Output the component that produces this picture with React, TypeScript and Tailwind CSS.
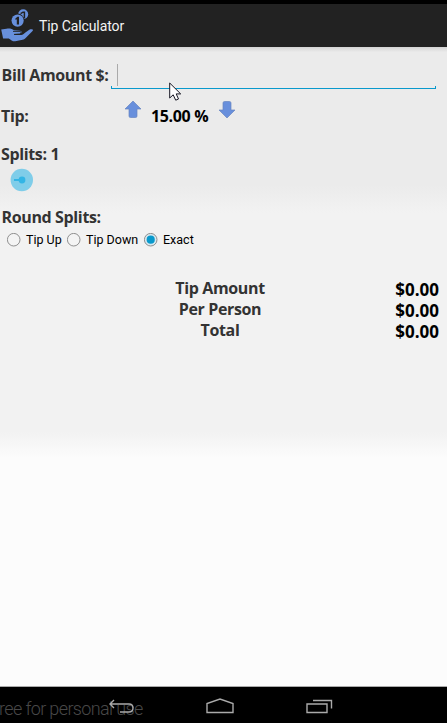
import type { ReactNode } from 'react';

function TipLogo() {
  return (
    <svg width="34" height="34" viewBox="0 0 34 34" fill="#678fdc" className="block">
      <circle cx="23.2" cy="5.2" r="5" />
      <path d="M20.6 4.6l2.4-1.4h1.4v6" stroke="#222" strokeWidth="1.5" fill="none" />
      <circle cx="17.6" cy="11.6" r="7" fill="#222" />
      <circle cx="17.6" cy="11.6" r="6.1" />
      <path d="M15.4 9.4l2.1-1.7h1.5v7.8h-2.2v-5.2l-1.2.6z" fill="#222" />
      <path d="M1.2 20.5L6.5 19.7c3-.7 5.4-.1 7.4 1.5l6.2.6c2 .3 2.1 2.5.2 2.9l-6 .2v1l7 .1c1.6-.2 2.4-1 3.4-2l4.6-3.2c1.9-.9 4.3-.3 3.5.9l-7.4 7.5c-1.2 1.2-2.3 1.6-4 1.8l-6.2 1.3c-2.8.2-4.1-1.4-6.4-2.9H3.1z" />
      <path d="M13 22.4h7.4q1.4 1.4-.2 2.7l-6.2.3" stroke="#222" strokeWidth=".9" fill="none" />
    </svg>
  );
}

function Arrow({ down = false }: { down?: boolean }) {
  return (
    <svg width="18" height="19" viewBox="0 0 18 19" className={down ? 'block rotate-180' : 'block'}>
      <path d="M9 1L17 9H13V16Q13 17.5 11.5 17.5H6.5Q5 17.5 5 16V9H1Z" fill="#688fdc" stroke="#6785c0" strokeWidth=".7" strokeLinejoin="round" />
    </svg>
  );
}

function Radio({ checked = false }: { checked?: boolean }) {
  return (
    <svg width="14" height="14" viewBox="0 0 14 14" className="block shrink-0">
      <circle cx="6.7" cy="6.7" r="6.3" fill={checked ? '#d9eaf1' : '#f4f4f4'} stroke="#858585" strokeWidth=".9" />
      {checked && <circle cx="6.7" cy="6.7" r="4.1" fill="#0999cc" />}
    </svg>
  );
}

function Label({ children }: { children: ReactNode }) {
  return <span className="block whitespace-nowrap text-base leading-5 font-bold tracking-[-0.36px] text-[#333]">{children}</span>;
}

export default function App() {
  const totals = ['Tip Amount', 'Per Person', 'Total'];
  return (
    <div className="flex h-[723px] w-[447px] flex-col overflow-hidden bg-black font-['Open_Sans','Noto_Sans',sans-serif]">
      <header className="mt-1 flex h-[43px] shrink-0 items-center bg-[#222]">
        <div className="h-[34px] w-[34px]"><TipLogo /></div>
        <h1 className="ml-[5px] whitespace-nowrap font-['Roboto',sans-serif] text-[14px] leading-5 tracking-[-0.1px] text-[#f3f3f3]">Tip Calculator</h1>
      </header>
      <main className="relative h-[639px] shrink-0 bg-[linear-gradient(to_bottom,#d3d3d3_0,#dfdfdf_2px,#e5e5e5_4px,#ebebeb_5px,#ebebeb_138px,#f2f2f2_166px,#f2f2f2_385px,#fcfcfc_411px)]">
        <div className="flex h-[42px] items-end">
          <div className="mb-1 ml-[1.5px] w-[109.5px]"><Label>Bill Amount $:</Label></div>
          <div className="h-[25px] w-[325px] pl-[6px]">
            <div className="h-[22px] w-px bg-[#aaa]" />
          </div>
        </div>
        <div className="-mt-[3px] ml-[111px] h-[3px] w-[325px] border-x border-b border-[#0999cc]" />
        <div className="flex h-[46px] items-start">
          <div className="mt-[17px] ml-px w-[123px]"><Label>Tip:</Label></div>
          <div className="mt-[11px] w-[18px]"><Arrow /></div>
          <div className="mt-[17px] ml-[9px] w-[67px] whitespace-nowrap text-base leading-5 font-bold tracking-[-0.36px] text-black">15.00 %</div>
          <div className="mt-[11px]"><Arrow down /></div>
        </div>
        <div className="mt-[9px] ml-px"><Label>Splits: 1</Label></div>
        <svg width="24" height="24" viewBox="0 0 24 24" className="mt-[4px] ml-[10px] block">
          <circle cx="11.8" cy="12" r="11.2" fill="#7fcde9" />
          <path d="M4 12h8" stroke="#33b5e5" strokeWidth="2" />
          <circle cx="12" cy="12" r="3.4" fill="#33b5e5" />
        </svg>
        <div className="mt-[15px] ml-[1.5px]"><Label>Round Splits:</Label></div>
        <div className="mt-[4px] ml-[7px] flex h-[18px] items-center whitespace-nowrap font-['Roboto',sans-serif] text-[12.5px] text-black">
          <div className="flex w-[60px] items-center gap-[5px]"><Radio />Tip Up</div>
          <div className="flex w-[77px] items-center gap-[5px]"><Radio />Tip Down</div>
          <div className="flex items-center gap-[5px]"><Radio checked />Exact</div>
        </div>
        <section className="mt-[29px] pr-2 pl-[150px]">
          {totals.map((name) => (
            <div key={name} className="flex h-[21px] items-center justify-between">
              <div className="-mt-px w-[140px] text-center"><Label>{name}</Label></div>
              <span className="mt-[2px] text-[17px] leading-5 font-bold text-black">$0.00</span>
            </div>
          ))}
        </section>
        <svg width="14" height="20" viewBox="0 0 14 20" className="absolute top-[35px] left-[169px]">
          <path d="M.7 1V16L4.2 12.8 6.7 18.2 9.5 17 7.2 11.9H11.7Z" fill="white" stroke="#171724" />
        </svg>
      </main>
      <nav className="relative h-[37px] shrink-0 overflow-hidden border-t border-[#aaa] bg-black">
        <div className="absolute top-[9px] left-[-1px] whitespace-nowrap font-['Roboto',sans-serif] text-[18px] leading-[26px] font-light tracking-[-0.63px] text-[#484848]">ree for personal use</div>
        <svg width="447" height="36" viewBox="0 0 447 36" className="absolute top-0 left-0" fill="none" stroke="#aaa" strokeWidth="1.4">
          <path d="M114 13L110 17l4 4M110 17h19q4 0 4 4t-4 4h-9" />
          <path d="M207 25.5V16.5L220 12l13 4.5v9Z" />
          <path d="M307 17h20v8.5h-20zM313 13.5h18.5v8" />
        </svg>
      </nav>
    </div>
  );
}
